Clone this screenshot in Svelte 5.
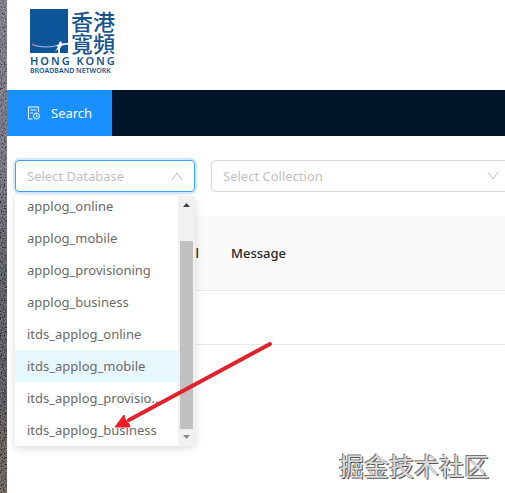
<script>
  const databases = [
    'applog_online',
    'applog_mobile',
    'applog_provisioning',
    'applog_business',
    'itds_applog_online',
    'itds_applog_mobile',
    'itds_applog_provisioning',
    'itds_applog_business'
  ];
  let active = $state('itds_applog_mobile');
</script>

<div class="screen">
  <svg class="wallpaper" aria-hidden="true" preserveAspectRatio="none">
    <defs>
      <linearGradient id="tone" x1="0" y1="0" x2="0" y2="1">
        <stop offset="0" stop-color="#6d687f" />
        <stop offset="0.35" stop-color="#5d5a6c" />
        <stop offset="0.55" stop-color="#3b3b46" />
        <stop offset="0.8" stop-color="#36363b" />
        <stop offset="1" stop-color="#51443b" />
      </linearGradient>
      <filter id="grain" x="0" y="0" width="100%" height="100%">
        <feTurbulence type="fractalNoise" baseFrequency="0.7" numOctaves="2" />
        <feColorMatrix values="2 0 0 0 -0.6  2 0 0 0 -0.6  2 0 0 0 -0.6  0 0 0 0 0.35" />
      </filter>
    </defs>
    <rect width="100%" height="100%" fill="url(#tone)" />
    <rect width="100%" height="100%" filter="url(#grain)" />
  </svg>

  <div class="app">
    <header>
      <div class="logo">
        <div class="mark">
          <svg width="38" height="44" viewBox="0 0 38 44" aria-hidden="true">
            <rect width="38" height="44" fill="#0d5499" />
            <path d="M4 36C11 38.500 20 38.500 27 36.500" fill="none" stroke="#a9cbe8" stroke-width="1" />
            <path d="M26 37L29 35L29.500 33L31 32L32 34.500L38 34L38 35.500L32 36.500L30 39L30 44L28 44L28 40L25 42.500L28 37.500Z" fill="#fff" />
            <circle cx="3" cy="35.500" r="1.200" fill="#d6536d" />
          </svg>
          <span class="han">香港<br />寬頻</span>
        </div>
        <span class="name">HONG KONG</span>
        <span class="sub">BROADBAND NETWORK</span>
      </div>
    </header>

    <nav>
      <a href="#search">
        <svg width="14" height="14" viewBox="0 0 14 14" fill="none" stroke="currentColor" stroke-width="1" aria-hidden="true">
          <path d="M5.500 13H1.500V1H11.500V6M3.500 4H9.500M3.500 7H6" />
          <circle cx="9.500" cy="10" r="3" />
          <path d="M9.500 8.500V10.500H11" />
        </svg>
        <span>Search</span>
      </a>
    </nav>

    <main>
      <div class="filters">
        <div class="field database open">
          <select aria-label="Database"><option>Select Database</option></select>
          <svg class="chevron" width="12" height="12" viewBox="0 0 12 12" aria-hidden="true"><path d="M1 10L6 3L11 10" /></svg>
          <div class="menu">
            <div class="options" role="listbox" aria-label="Databases">
              {#each databases as name}
                <button role="option" aria-selected={active === name} class:active={active === name} onclick={() => (active = name)}>{name}</button>
              {/each}
            </div>
            <div class="scrollbar" aria-hidden="true">
              <svg width="17" height="17" viewBox="0 0 17 17"><path d="M5 11L8.500 7L12 11Z" fill="#404040" /></svg>
              <div class="rail"><div class="thumb"></div></div>
              <svg width="17" height="17" viewBox="0 0 17 17"><path d="M5 6L8.500 10L12 6Z" fill="#8b8b8b" /></svg>
            </div>
          </div>
        </div>
        <div class="field collection">
          <select aria-label="Collection"><option>Select Collection</option></select>
          <svg class="chevron" width="12" height="12" viewBox="0 0 12 12" aria-hidden="true"><path d="M1 2L6 9L11 2" /></svg>
        </div>
      </div>

      <table>
        <thead>
          <tr><th class="time"></th><th class="level">Level</th><th>Message</th></tr>
        </thead>
        <tbody>
          <tr><td></td><td></td><td></td></tr>
        </tbody>
      </table>
    </main>
  </div>

  <svg class="arrow" width="160" height="90" viewBox="0 0 160 90" aria-hidden="true">
    <path d="M156 4L15 80" stroke="#df222b" stroke-width="4" stroke-linecap="round" />
    <path d="M1 87L10 75L11 79L15 84L16 87Z" fill="#f01c25" stroke="#f01c25" stroke-width="1" />
  </svg>
  <div class="watermark">掘金技术社区</div>
</div>

<style>
  :global(body) {
    margin: 0;
    background: #fff;
  }
  .screen {
    position: relative;
    display: flex;
    min-height: 100vh;
    overflow: hidden;
    font: 13px/32px 'Noto Sans', 'Open Sans', sans-serif;
  }
  .wallpaper {
    flex: none;
    align-self: stretch;
    width: 7px;
    height: auto;
  }
  .app {
    flex: 1;
    min-width: 0;
  }
  header {
    box-sizing: border-box;
    height: 90px;
    padding: 9px 23px;
  }
  .logo {
    display: flex;
    flex-direction: column;
    width: max-content;
    color: #17548f;
  }
  .mark {
    display: flex;
    gap: 3px;
  }
  .han {
    font: 500 22px/22px 'Noto Sans CJK TC', sans-serif;
  }
  .name {
    margin-top: 2px;
    font: 600 11px/12px 'Noto Sans', sans-serif;
    letter-spacing: 2px;
  }
  .sub {
    font: 600 7px/8px 'Noto Sans', sans-serif;
  }
  nav {
    display: flex;
    height: 46px;
    background: #001529;
  }
  nav a {
    display: flex;
    align-items: center;
    gap: 10px;
    padding: 0 20px;
    background: #1890ff;
    color: #fff;
    text-decoration: none;
  }
  main {
    padding: 24px 0 0 8px;
  }
  .filters {
    display: flex;
    gap: 16px;
  }
  .field {
    position: relative;
  }
  .database {
    flex: 0 0 180px;
  }
  .collection {
    flex: 1;
    margin-right: -6px;
  }
  select {
    display: block;
    box-sizing: border-box;
    width: 100%;
    height: 32px;
    padding: 0 11px;
    appearance: none;
    border: 1px solid #d9d9d9;
    border-radius: 4px;
    outline: none;
    background: #fff;
    color: #bfbfbf;
    font: inherit;
    line-height: 30px;
  }
  .open select {
    border-color: #40a0f4;
    box-shadow: 0 0 0 2px #d3eafd;
  }
  .chevron {
    position: absolute;
    top: 10px;
    right: 12px;
    fill: none;
    stroke: #bfbfbf;
    stroke-width: 1;
    pointer-events: none;
  }
  .menu {
    position: absolute;
    z-index: 1;
    top: 36px;
    left: 0;
    display: flex;
    width: 100%;
    height: 250px;
    overflow: hidden;
    border-radius: 4px;
    background: #fff;
  }
  .field.open::after {
    content: '';
    position: absolute;
    top: 36px;
    left: 0;
    width: 100%;
    height: 250px;
    border-radius: 4px;
    box-shadow: 0 2px 8px rgba(0, 0, 0, 0.15);
  }
  .options {
    flex: 1;
    min-width: 0;
    display: flex;
    flex-direction: column;
    justify-content: flex-end;
  }
  .options button {
    flex: none;
    height: 32px;
    padding: 0 12px;
    overflow: hidden;
    border: 0;
    background: #fff;
    color: #6a6a6a;
    font: inherit;
    text-align: left;
    text-overflow: ellipsis;
    white-space: nowrap;
  }
  .options button.active {
    background: #e6f7ff;
  }
  .scrollbar {
    display: flex;
    flex-direction: column;
    width: 17px;
    background: #f1f1f1;
  }
  .scrollbar svg {
    display: block;
  }
  .rail {
    display: flex;
    flex: 1;
    align-items: flex-end;
    padding: 0 2px;
  }
  .thumb {
    width: 100%;
    height: 87%;
    background: #c1c1c1;
  }
  table {
    width: 100%;
    margin-top: 24px;
    border-collapse: collapse;
    table-layout: fixed;
  }
  th {
    box-sizing: border-box;
    height: 74px;
    padding: 0 16px;
    border-bottom: 1px solid #e8e8e8;
    background: #fafafa;
    color: #262626;
    font-weight: 500;
    text-align: left;
  }
  .time {
    width: 129px;
  }
  .level {
    width: 71px;
    text-align: right;
  }
  td {
    height: 53px;
    padding: 0;
    border-bottom: 1px solid #e8e8e8;
  }
  .arrow {
    position: absolute;
    z-index: 2;
    top: 340px;
    left: 114px;
    pointer-events: none;
  }
  .watermark {
    position: absolute;
    right: 16px;
    bottom: 11px;
    color: #dcdcdc;
    font: 25px/34px 'Noto Sans CJK SC', sans-serif;
    text-shadow: -1px -1px 0 #777, 1px 1px 0 #555;
  }
</style>
